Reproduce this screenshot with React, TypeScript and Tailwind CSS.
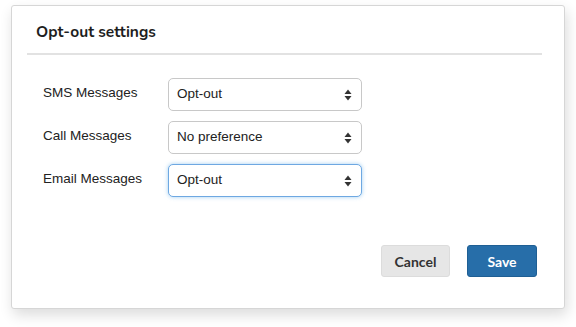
const rows = [
    { label: 'SMS Messages', value: 'Opt-out', focus: false },
    { label: 'Call Messages', value: 'No preference', focus: false },
    { label: 'Email Messages', value: 'Opt-out', focus: true },
];

function Arrows() {
    return (
        <svg width="8" height="12" viewBox="0 0 8 12" className="text-[#333]">
            <path d="M4 0.5 L7.5 5 H0.5 Z" fill="currentColor" />
            <path d="M4 11.5 L7.5 7 H0.5 Z" fill="currentColor" />
        </svg>
    );
}

export default function App() {
    return (
        <div className="w-[576px] h-[327px] bg-white pt-[5px] pl-[11px]">
            <div className="w-[554px] h-[304px] flex flex-col bg-white border border-[#d6d6d6] rounded-[3px] shadow-[2px_6px_14px_rgba(0,0,0,0.14)]">
                {/* header */}
                <div className="h-[47px] flex items-center pl-[24px] pt-[4px]">
                    <h2 className="text-[15.5px] font-bold text-[#1e1e1e] font-['Nunito','Lato',sans-serif]">
                        Opt-out settings
                    </h2>
                </div>
                <div className="h-[2px] bg-[#e2e2e2] ml-[15px] mr-[22px]" />

                {/* rows */}
                <div className="flex flex-col gap-[10px] pt-[23px] font-['Liberation_Sans',Arial,sans-serif]">
                    {rows.map(r => (
                        <div key={r.label} className="flex items-center h-[33px]">
                            <div className="w-[156px] shrink-0 pl-[31px] text-[13.5px] text-[#222] -mt-[3px] whitespace-nowrap">{r.label}</div>
                            <div
                                className={`w-[194px] h-[33px] flex items-center justify-between pl-[8px] pr-[9px] rounded-[5px] bg-white text-[13.5px] text-[#222] ${r.focus
                                    ? 'border border-[#6ea8e2] shadow-[0_0_4px_rgba(102,175,233,0.6)]'
                                    : 'border border-[#c8c8c8]'
                                    }`}
                            >
                                <span>{r.value}</span>
                                <Arrows />
                            </div>
                        </div>
                    ))}
                </div>

                {/* footer */}
                <div className="mt-auto flex justify-end gap-[17px] pr-[27px] pb-[31px] font-['Lato',sans-serif]">
                    <button className="w-[69px] h-[32px] rounded-[3px] bg-[#e6e6e6] border border-[#dcdcdc] text-[14px] font-bold text-[#333]">
                        Cancel
                    </button>
                    <button className="w-[70px] h-[32px] rounded-[3px] bg-[#276ea9] border border-[#1f5f94] text-[14px] font-bold text-white">
                        Save
                    </button>
                </div>
            </div>
        </div>
    );
}
